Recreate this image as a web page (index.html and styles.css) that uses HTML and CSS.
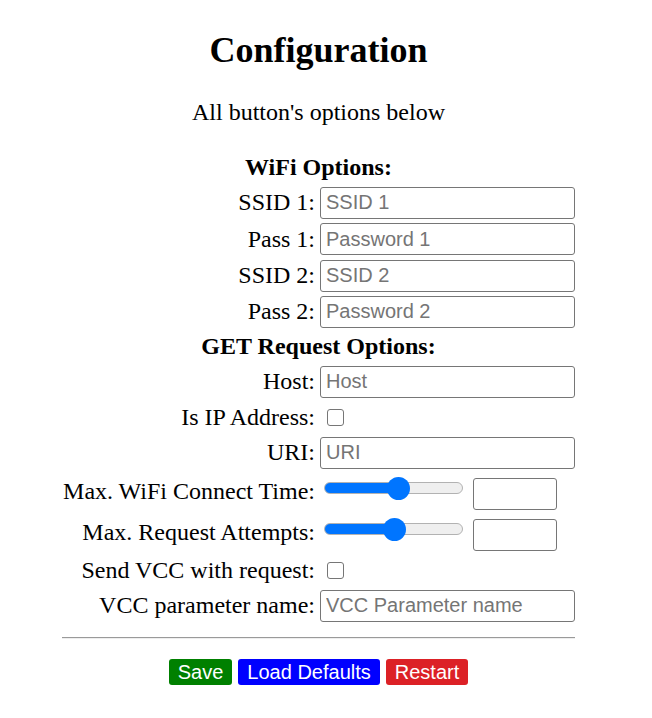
FILE: index.html
```html
<!DOCTYPE html>
<html lang="en">
<head>
    <meta charset="UTF-8">
    <meta name="viewport" content="width=device-width, initial-scale=1.0">
    <title>Configuration</title>
    <link rel="stylesheet" href="styles.css">
</head>
<body>

<div class="page">
    <h1>Configuration</h1>
    <p class="intro">All button's options below</p>

    <form class="config">
        <div class="section">WiFi Options:</div>

        <label class="label" for="ssid1">SSID 1:</label>
        <div class="field"><input class="text" type="text" id="ssid1" placeholder="SSID 1"></div>

        <label class="label" for="pass1">Pass 1:</label>
        <div class="field"><input class="text" type="password" id="pass1" placeholder="Password 1"></div>

        <label class="label" for="ssid2">SSID 2:</label>
        <div class="field"><input class="text" type="text" id="ssid2" placeholder="SSID 2"></div>

        <label class="label" for="pass2">Pass 2:</label>
        <div class="field"><input class="text" type="password" id="pass2" placeholder="Password 2"></div>

        <div class="section">GET Request Options:</div>

        <label class="label" for="host">Host:</label>
        <div class="field"><input class="text" type="text" id="host" placeholder="Host"></div>

        <label class="label" for="isip">Is IP Address:</label>
        <div class="field short"><input class="check" type="checkbox" id="isip"></div>

        <label class="label" for="uri">URI:</label>
        <div class="field"><input class="text" type="text" id="uri" placeholder="URI"></div>

        <label class="label" for="wifitime">Max. WiFi Connect Time:</label>
        <div class="field slider-field">
            <input class="range" type="range" id="wifitime" min="0" max="100" value="54" style="--fill: 53%">
            <input class="number" type="number">
        </div>

        <label class="label" for="attempts">Max. Request Attempts:</label>
        <div class="field slider-field">
            <input class="range" type="range" id="attempts" min="0" max="100" value="51" style="--fill: 51%">
            <input class="number" type="number">
        </div>

        <label class="label" for="sendvcc">Send VCC with request:</label>
        <div class="field short"><input class="check" type="checkbox" id="sendvcc"></div>

        <label class="label" for="vccname">VCC parameter name:</label>
        <div class="field"><input class="text" type="text" id="vccname" placeholder="VCC Parameter name"></div>

        <hr class="divider">
    </form>

    <div class="buttons">
        <button class="btn save" type="button">Save</button>
        <button class="btn defaults" type="button">Load Defaults</button>
        <button class="btn restart" type="button">Restart</button>
    </div>
</div>

</body>
</html>
```

FILE: styles.css
```css
body {
    margin: 0;
    padding: 0;
    font-family: "Liberation Serif", "Times New Roman", serif;
    font-size: 24px;
    color: #000;
    background-color: #fff;
}

.page {
    width: 637px;
    text-align: center;
}

h1 {
    font-size: 36px;
    margin: 29px 0 0;
}

.intro {
    margin: 27.7px 0 0;
}

.config {
    display: grid;
    grid-template-columns: 253px 255px;
    column-gap: 5px;
    align-items: center;
    width: max-content;
    margin: 25.5px auto 0;
}

.section {
    grid-column: 1 / -1;
    font-weight: bold;
    height: 33.6px;
    line-height: 33.6px;
}

.label {
    text-align: right;
    white-space: nowrap;
}

.field {
    display: flex;
    align-items: center;
    height: 36.33px;
}

.field.short {
    height: 34.7px;
}

.slider-field {
    height: 41px;
    align-items: flex-start;
}

.text {
    box-sizing: border-box;
    width: 255px;
    height: 32px;
    margin: 0;
    padding: 0 5px;
    border: 1px solid #767676;
    border-radius: 3px;
    font-family: "Liberation Sans", Arial, sans-serif;
    font-size: 20px;
    color: #000;
}

.text::placeholder {
    color: #757575;
}

.check {
    -webkit-appearance: none;
    appearance: none;
    box-sizing: border-box;
    width: 17px;
    height: 17px;
    margin: 0 0 0 7px;
    border: 1.5px solid #767676;
    border-radius: 3px;
    background-color: #fff;
}

.range {
    -webkit-appearance: none;
    appearance: none;
    width: 139px;
    height: 12px;
    margin: 11.3px 0 0 4px;
    padding: 0;
    background: transparent;
}

.range::-webkit-slider-runnable-track {
    height: 12px;
    border-radius: 6px;
    box-sizing: border-box;
    border: 1px solid #b2b2b2;
    background: linear-gradient(to right, #0075ff 0, #0075ff var(--fill), #efefef var(--fill), #efefef 100%);
}

.range::-webkit-slider-thumb {
    -webkit-appearance: none;
    appearance: none;
    width: 23px;
    height: 23px;
    margin-top: -6.5px;
    border: none;
    border-radius: 50%;
    background-color: #0075ff;
}

.number {
    box-sizing: border-box;
    width: 84px;
    height: 32px;
    margin: 7.3px 0 0 10px;
    border: 1px solid #767676;
    border-radius: 3px;
    font-family: "Liberation Sans", Arial, sans-serif;
    font-size: 20px;
}

.divider {
    grid-column: 1 / -1;
    align-self: start;
    width: 100%;
    margin: 13px 0 0;
    border: none;
    border-top: 1px solid #9a9a9a;
    border-bottom: 1px solid #eeeeee;
}

.buttons {
    margin-top: 20px;
}

.btn {
    height: 26px;
    margin: 0;
    padding: 0 9px;
    border: none;
    border-radius: 3px;
    font-family: "Liberation Sans", Arial, sans-serif;
    font-size: 20px;
    line-height: 26px;
    color: #fff;
    vertical-align: top;
}

.save {
    background-color: #008000;
}

.defaults {
    background-color: #0000ff;
}

.restart {
    background-color: #dc2126;
}
```
